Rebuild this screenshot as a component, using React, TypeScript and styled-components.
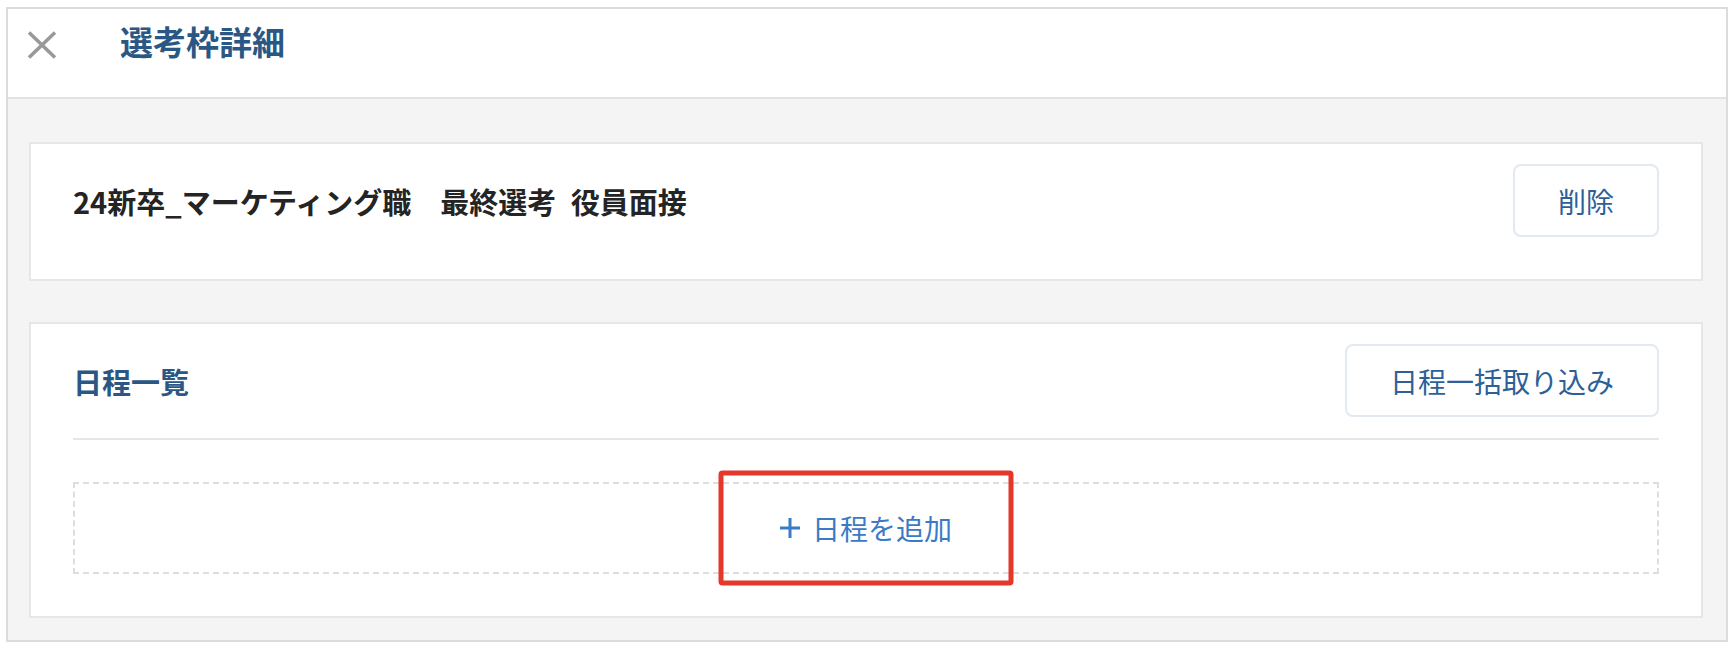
import React from 'react';
import styled, { createGlobalStyle } from 'styled-components';

const GlobalStyle = createGlobalStyle`
  html, body {
    margin: 0;
    background: #ffffff;
  }
  body {
    font-family: 'Noto Sans CJK JP', 'Noto Sans', sans-serif;
  }
  * {
    box-sizing: border-box;
  }
`;

const Page = styled.div`
  padding: 7px 8px 0 6px;
`;

const Panel = styled.div`
  height: 635px;
  border: 2px solid #dcdcdc;
  background: #f4f4f4;
  display: flex;
  flex-direction: column;
`;

const Header = styled.header`
  height: 90px;
  flex-shrink: 0;
  display: flex;
  align-items: flex-start;
  padding: 8px 0 0 19px;
  background: #ffffff;
  border-bottom: 2px solid #e3e3e3;
`;

const CloseButton = styled.button`
  margin-top: 14px;
  padding: 0;
  border: none;
  background: none;
  display: flex;
  cursor: pointer;
`;

const Title = styled.h1`
  margin: 0 0 0 63px;
  font-size: 33px;
  line-height: 48px;
  font-weight: 700;
  color: #2a5784;
`;

const Body = styled.div`
  flex: 1;
  display: flex;
  flex-direction: column;
  gap: 41px;
  padding: 43px 23px 0 21px;
`;

const Card = styled.section`
  background: #ffffff;
  border: 2px solid #e6e6e6;
  padding: 20px 42px 42px;
`;

const Row = styled.div<{ $divided?: boolean }>`
  display: flex;
  align-items: center;
  justify-content: space-between;
  ${(props) =>
    props.$divided &&
    `
    padding-bottom: 21px;
    border-bottom: 2px solid #e6e6e6;
  `}
`;

const SelectionName = styled.p`
  margin: 0;
  font-size: 29px;
  line-height: 40px;
  font-weight: 700;
  color: #242424;
`;

const SectionTitle = styled.h2`
  margin: 0;
  font-size: 29px;
  line-height: 40px;
  font-weight: 700;
  color: #2a5784;
`;

const OutlineButton = styled.button`
  height: 73px;
  padding: 0 43px;
  border: 2px solid #e3e9f1;
  border-radius: 8px;
  background: #ffffff;
  font-family: inherit;
  font-size: 28px;
  color: #2d6098;
  cursor: pointer;
`;

const DropZone = styled.div`
  margin-top: 42px;
  height: 92px;
  border: 2px dashed #dedede;
  display: flex;
  align-items: center;
  justify-content: center;
`;

const AddButton = styled.button`
  position: relative;
  display: inline-flex;
  align-items: center;
  gap: 12px;
  padding: 0;
  border: none;
  background: none;
  font-family: inherit;
  font-size: 28px;
  line-height: 40px;
  color: #3a7ac6;
  cursor: pointer;
`;

const Highlight = styled.span`
  position: absolute;
  left: 50%;
  top: 50%;
  width: 295px;
  height: 115px;
  transform: translate(-50%, -50%);
  border: 5px solid #e5372a;
  border-radius: 4px;
  pointer-events: none;
`;

export default function App() {
  return (
    <>
      <GlobalStyle />
      <Page>
        <Panel>
          <Header>
            <CloseButton aria-label='閉じる'>
              <svg width='30' height='28' viewBox='0 0 30 28'>
                <path d='M2 1.5 L28 26.5 M28 1.5 L2 26.5' stroke='#999999' strokeWidth='3.6' fill='none' />
              </svg>
            </CloseButton>
            <Title>選考枠詳細</Title>
          </Header>

          <Body>
            <Card>
              <Row>
                <SelectionName>24新卒_マーケティング職　最終選考&ensp;役員面接</SelectionName>
                <OutlineButton>削除</OutlineButton>
              </Row>
            </Card>

            <Card>
              <Row $divided>
                <SectionTitle>日程一覧</SectionTitle>
                <OutlineButton>日程一括取り込み</OutlineButton>
              </Row>
              <DropZone>
                <AddButton>
                  <svg width='20' height='20' viewBox='0 0 20 20'>
                    <path d='M10 0 V20 M0 10 H20' stroke='#3a7ac6' strokeWidth='3' fill='none' />
                  </svg>
                  日程を追加
                  <Highlight />
                </AddButton>
              </DropZone>
            </Card>
          </Body>
        </Panel>
      </Page>
    </>
  );
}
